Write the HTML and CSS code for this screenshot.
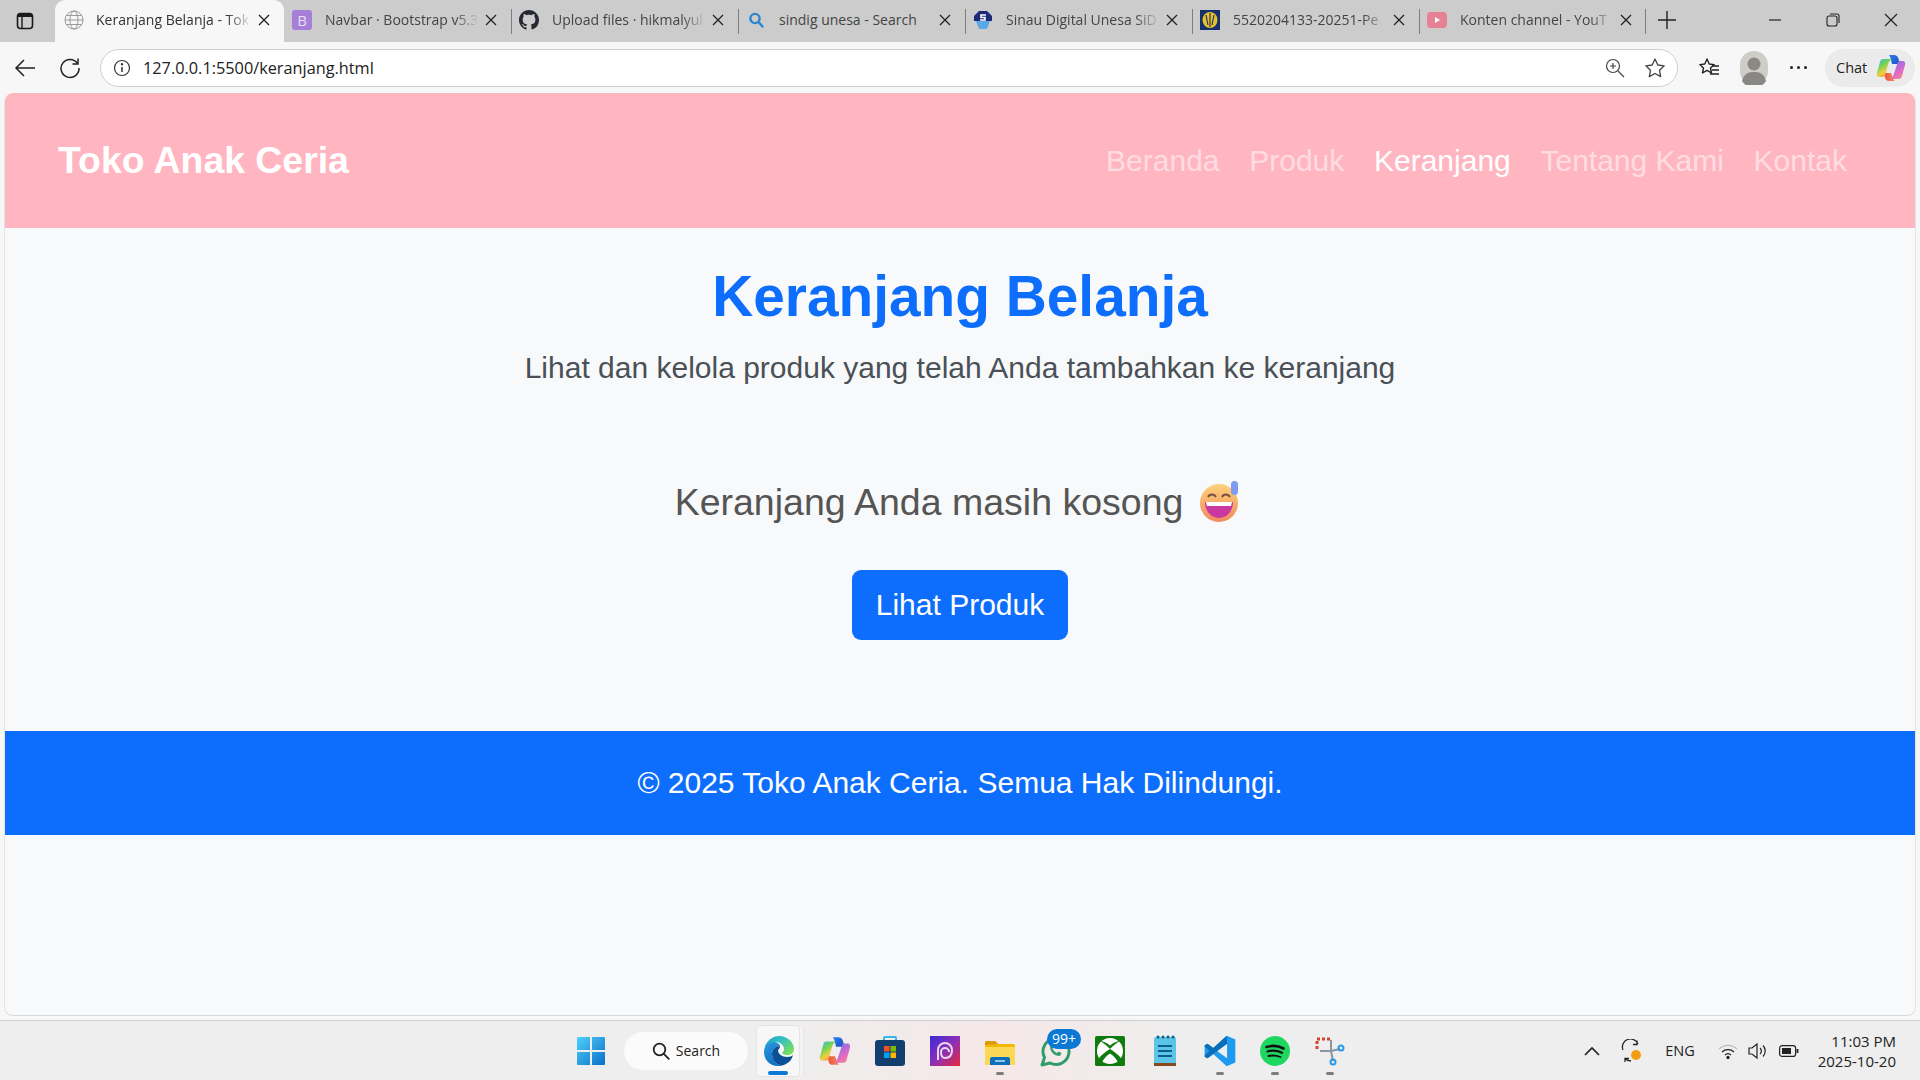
FILE: index.html
```html
<!DOCTYPE html>
<html lang="id">
<head>
<meta charset="utf-8">
<title>Keranjang Belanja - Toko Anak Ceria</title>
<link rel="stylesheet" href="styles.css">
</head>
<body>
<div class="tabstrip">
  <div class="tab-toggle"><svg width="18" height="18" viewBox="0 0 18 18"><rect x="1.5" y="1.5" width="15" height="15" rx="3" fill="none" stroke="#1a1a1a" stroke-width="1.6"/><path d="M2 2h14v3H2z" fill="#1a1a1a"/><path d="M6 5v11" stroke="#1a1a1a" stroke-width="1.4"/></svg></div>
  <div class="tab tab-active">
    <svg class="fav" width="20" height="20" viewBox="0 0 20 20" fill="none" stroke="#9a9a9a" stroke-width="1"><circle cx="10" cy="10" r="9"/><ellipse cx="10" cy="10" rx="4" ry="9"/><path d="M1 10h18M2.5 5.5h15M2.5 14.5h15"/></svg>
    <span class="tab-title">Keranjang Belanja - Tok</span>
    <span class="tab-x"><svg width="12" height="12" viewBox="0 0 12 12"><path d="M1 1l10 10M11 1L1 11" stroke="#222" stroke-width="1.3"/></svg></span>
  </div>
  <div class="tab">
    <span class="fav fav-b">B</span>
    <span class="tab-title">Navbar · Bootstrap v5.3</span>
    <span class="tab-x"><svg width="12" height="12" viewBox="0 0 12 12"><path d="M1 1l10 10M11 1L1 11" stroke="#222" stroke-width="1.3"/></svg></span>
  </div>
  <div class="tab tab-sep">
    <svg class="fav" width="20" height="20" viewBox="0 0 16 16"><path fill="#24292f" d="M8 0C3.58 0 0 3.58 0 8c0 3.54 2.29 6.53 5.47 7.59.4.07.55-.17.55-.38 0-.19-.01-.82-.01-1.49-2.01.37-2.53-.49-2.69-.94-.09-.23-.48-.94-.82-1.13-.28-.15-.68-.52-.01-.53.63-.01 1.08.58 1.23.82.72 1.21 1.87.87 2.33.66.07-.52.28-.87.51-1.07-1.78-.2-3.64-.89-3.64-3.95 0-.87.31-1.59.82-2.15-.08-.2-.36-1.02.08-2.12 0 0 .67-.21 2.2.82.64-.18 1.32-.27 2-.27s1.36.09 2 .27c1.53-1.04 2.2-.82 2.2-.82.44 1.1.16 1.92.08 2.12.51.56.82 1.27.82 2.15 0 3.07-1.87 3.75-3.65 3.95.29.25.54.73.54 1.48 0 1.07-.01 1.93-.01 2.2 0 .21.15.46.55.38A8.01 8.01 0 0 0 16 8c0-4.42-3.58-8-8-8z"/></svg>
    <span class="tab-title">Upload files · hikmalyul</span>
    <span class="tab-x"><svg width="12" height="12" viewBox="0 0 12 12"><path d="M1 1l10 10M11 1L1 11" stroke="#222" stroke-width="1.3"/></svg></span>
  </div>
  <div class="tab tab-sep">
    <svg class="fav" width="20" height="20" viewBox="0 0 20 20" fill="none" stroke="#2b86d0" stroke-width="2.4"><circle cx="9" cy="8.5" r="4.6"/><path d="M12.5 12l4 4.5" stroke-linecap="round"/></svg>
    <span class="tab-title tab-title-full">sindig unesa - Search</span>
    <span class="tab-x"><svg width="12" height="12" viewBox="0 0 12 12"><path d="M1 1l10 10M11 1L1 11" stroke="#222" stroke-width="1.3"/></svg></span>
  </div>
  <div class="tab tab-sep">
    <svg class="fav" width="20" height="20" viewBox="0 0 20 20"><path fill="#5aa9e6" d="M3 11h14l-3 8H6z"/><path fill="#1c2a78" d="M6 1h8l5 5v5H1V6z"/><path d="M13 5H8v2.5h4V10H7" fill="none" stroke="#fff" stroke-width="1.6"/></svg>
    <span class="tab-title">Sinau Digital Unesa SiD</span>
    <span class="tab-x"><svg width="12" height="12" viewBox="0 0 12 12"><path d="M1 1l10 10M11 1L1 11" stroke="#222" stroke-width="1.3"/></svg></span>
  </div>
  <div class="tab tab-sep">
    <svg class="fav" width="20" height="20" viewBox="0 0 20 20"><rect width="20" height="20" fill="#16306b"/><ellipse cx="10" cy="10" rx="7.5" ry="8" fill="#e8c02c"/><path d="M10 3v14M6 5l2 10M14 5l-2 10" stroke="#16306b" stroke-width="1.1"/></svg>
    <span class="tab-title">5520204133-20251-Pe</span>
    <span class="tab-x"><svg width="12" height="12" viewBox="0 0 12 12"><path d="M1 1l10 10M11 1L1 11" stroke="#222" stroke-width="1.3"/></svg></span>
  </div>
  <div class="tab tab-sep tab-last">
    <svg class="fav" width="20" height="20" viewBox="0 0 20 20"><rect y="2" width="20" height="16" rx="4" fill="#e77f95"/><path d="M8 7l5 3-5 3z" fill="#fff"/></svg>
    <span class="tab-title">Konten channel - YouT</span>
    <span class="tab-x"><svg width="12" height="12" viewBox="0 0 12 12"><path d="M1 1l10 10M11 1L1 11" stroke="#222" stroke-width="1.3"/></svg></span>
  </div>
  <div class="tab-plus"><svg width="18" height="18" viewBox="0 0 18 18"><path d="M9 0v18M0 9h18" stroke="#222" stroke-width="1.4"/></svg></div>
  <div class="win-controls">
    <svg width="14" height="14" viewBox="0 0 14 14"><path d="M1 7h12" stroke="#222" stroke-width="1.2"/></svg>
    <svg width="14" height="14" viewBox="0 0 14 14" fill="none" stroke="#222" stroke-width="1.1"><rect x="1" y="3" width="10" height="10" rx="2"/><path d="M4 1h7a2 2 0 0 1 2 2v7"/></svg>
    <svg width="14" height="14" viewBox="0 0 14 14"><path d="M1 1l12 12M13 1L1 13" stroke="#222" stroke-width="1.2"/></svg>
  </div>
</div>

<div class="toolbar">
  <svg class="tool-back" width="22" height="20" viewBox="0 0 22 20" fill="none" stroke="#222" stroke-width="1.5"><path d="M21 10H2M10 2l-8 8 8 8"/></svg>
  <svg class="tool-reload" width="22" height="22" viewBox="0 0 22 22" fill="none" stroke="#222" stroke-width="1.5"><path d="M18.5 6.5A9 9 0 1 0 20 11"/><path d="M19 1.5v5.5h-5.5"/></svg>
  <div class="address">
    <svg width="18" height="18" viewBox="0 0 18 18" fill="none" stroke="#333" stroke-width="1.2"><circle cx="9" cy="9" r="7.5"/><path d="M9 8v5" stroke-width="1.5"/><circle cx="9" cy="5.3" r=".6" fill="#333"/></svg>
    <span class="url">127.0.0.1:5500/keranjang.html</span>
    <svg class="addr-zoom" width="20" height="20" viewBox="0 0 20 20" fill="none" stroke="#444" stroke-width="1.2"><circle cx="8" cy="8" r="6.5"/><path d="M8 5v6M5 8h6M13 13l6 6"/></svg>
    <svg class="addr-star" width="22" height="22" viewBox="0 0 22 22" fill="none" stroke="#444" stroke-width="1.3"><path d="M11 2l2.8 6 6.4.8-4.7 4.4 1.2 6.4L11 16.5l-5.7 3.1 1.200-6.400L1.800 8.800 8.200 8z" stroke-linejoin="round"/></svg>
  </div>
  <svg class="tool-fav" width="22" height="22" viewBox="0 0 22 22" fill="none" stroke="#222" stroke-width="1.4"><path d="M9 2l2.200 5 5 .6-3.700 3.400 1 5L9 13.400 4.500 16l1-5L1.800 7.600l5-.6z" stroke-linejoin="round"/><path d="M14 9h7M14 13h7M12 17h9"/></svg>
  <div class="avatar"><svg width="28" height="34" viewBox="0 0 28 34"><rect width="28" height="34" rx="14" fill="#cfcdc8"/><circle cx="14" cy="13" r="6.500" fill="#8a8884"/><path d="M2 30c2-8 7-9 12-9s10 1 12 9a14 14 0 0 1-24 0z" fill="#8a8884"/></svg></div>
  <div class="tool-more"><i></i><i></i><i></i></div>
  <div class="chat">
    <span>Chat</span>
    <svg width="30" height="30" viewBox="0 0 30 30">
      <defs>
        <linearGradient id="cpL" x1="0" y1="0" x2=".6" y2="1"><stop offset="0" stop-color="#2bb8e8"/><stop offset=".4" stop-color="#6fd35a"/><stop offset=".75" stop-color="#f5cf3c"/><stop offset="1" stop-color="#f0803a"/></linearGradient>
        <linearGradient id="cpR" x1=".4" y1="0" x2="1" y2="1"><stop offset="0" stop-color="#8a6cf0"/><stop offset=".6" stop-color="#e86ac0"/><stop offset="1" stop-color="#f59a6a"/></linearGradient>
        <linearGradient id="cpT" x1="0" y1="0" x2="1" y2="1"><stop offset="0" stop-color="#2f7ef0"/><stop offset="1" stop-color="#1b4fc0"/></linearGradient>
        <linearGradient id="cpB" x1="0" y1="0" x2="1" y2="0"><stop offset="0" stop-color="#f0503a"/><stop offset="1" stop-color="#f58a5a"/></linearGradient>
        <symbol id="cp" viewBox="0 0 30 30">
          <path fill="url(#cpT)" d="M13 2h5c2.500 0 3.700 1.300 4.300 3.200L24 11h-8l-1-4c-.4-1.800-1-3.600-2-5z"/>
          <path fill="url(#cpB)" d="M8 20h7l1.500 4c.6 1.800 1.200 3 2.500 4h-6c-2.500 0-3.500-1.300-4-3.200z"/>
          <path fill="url(#cpL)" d="M7 6h9c-2 1-3 2.500-3.800 5L9.500 21c-.8 2.400-2 3-4 3H3.500C1 24 .4 22 1 20L4 9c.5-2 1.300-3 3-3z"/>
          <path fill="url(#cpR)" d="M23 8h3.500c2.500 0 3 2 2.500 4l-3 11c-.5 2-1.300 3-3 3h-9c2-1 3-2.500 3.800-5l3.400-10c.5-1.800 1-3 1.800-3z"/>
        </symbol>
      </defs>
      <use href="#cp"/>
    </svg>
  </div>
</div>

<div class="viewport">
  <header class="navbar">
    <a class="brand">Toko Anak Ceria</a>
    <nav class="nav">
      <a class="nav-link">Beranda</a>
      <a class="nav-link">Produk</a>
      <a class="nav-link nav-link-active">Keranjang</a>
      <a class="nav-link">Tentang Kami</a>
      <a class="nav-link">Kontak</a>
    </nav>
  </header>
  <main class="content">
    <h1 class="title">Keranjang Belanja</h1>
    <p class="lead">Lihat dan kelola produk yang telah Anda tambahkan ke keranjang</p>
    <p class="empty">Keranjang Anda masih kosong
      <svg class="emoji" width="40" height="42" viewBox="0 0 40 42"><defs><linearGradient id="emo" x1="0" y1="0" x2="0" y2="1"><stop offset="0" stop-color="#fdd27a"/><stop offset="1" stop-color="#f08a5d"/></linearGradient></defs><circle cx="19" cy="22" r="19" fill="url(#emo)"/><path d="M5 21h28c0 10-7 16-14 16S5 31 5 21z" fill="#c9389f"/><path d="M6 21h26l-1 4H7z" fill="#fff"/><path d="M8 16c1.500-3.500 6-3.500 8 0M22 16c1.500-3.500 6-3.500 8 0" fill="none" stroke="#7a5040" stroke-width="2"/><rect x="31" y="0" width="7" height="14" rx="3.500" fill="#7c9bf2"/></svg>
    </p>
    <a class="btn">Lihat Produk</a>
  </main>
  <footer class="footer">© 2025 Toko Anak Ceria. Semua Hak Dilindungi.</footer>
</div>

<div class="taskbar">
  <div class="task-center">
    <div class="task-icon"><svg width="30" height="30" viewBox="0 0 30 30"><defs><linearGradient id="win" x1="0" y1="0" x2="1" y2="1"><stop offset="0" stop-color="#4fd0fa"/><stop offset="1" stop-color="#0a6fc8"/></linearGradient></defs><path fill="url(#win)" d="M1 2a1 1 0 0 1 1-1h12v13H1zM16 1h12a1 1 0 0 1 1 1v12H16zM1 16h13v13H2a1 1 0 0 1-1-1zM16 16h13v12a1 1 0 0 1-1 1H16z"/></svg></div>
    <div class="task-search"><svg width="18" height="18" viewBox="0 0 18 18" fill="none" stroke="#222" stroke-width="1.800"><circle cx="7.500" cy="7.500" r="5.800"/><path d="M11.800 11.800l5 5" stroke-linecap="round"/></svg><span>Search</span></div>
    <div class="task-icon task-edge">
      <svg width="32" height="32" viewBox="0 0 32 32"><defs><linearGradient id="edgeA" x1="0" y1="0" x2="1" y2=".7"><stop offset="0" stop-color="#1f9fd0"/><stop offset=".5" stop-color="#35c1c0"/><stop offset="1" stop-color="#7ade5a"/></linearGradient><linearGradient id="edgeB" x1="0" y1="0" x2=".5" y2="1"><stop offset="0" stop-color="#2a9ae0"/><stop offset="1" stop-color="#0f6fc0"/></linearGradient></defs><path fill="url(#edgeA)" d="M3 9C6 4 11 1 16 1c9 0 15 7 15 13 0 4-3 6-7 6-2 0-4-.5-5-2 1-1 2-2 2-4 0-4-4-7-8-7-5 0-9 3-11 7-.5-2 0-3 1-5z"/><path fill="url(#edgeB)" d="M1 17c0-6 5-10 9.500-10C14 7 16.500 9 17 11c-4 0-8 3-8 8 0 5 4 11 10 11.500-1 .4-3 .5-4 .5C7 31 1 25 1 17z"/><path fill="#0b4f94" d="M9 19c0-5 4-8 8-8 0 2-1 3-2 4 0 4 4 7 9 7 3 0 5-1 6-2-2 7-6 9-11 10.500C13 30 9 24.500 9 19z"/></svg>
      <i class="run run-active"></i>
    </div>
    <div class="task-icon"><svg width="32" height="32" viewBox="0 0 30 30"><use href="#cp"/></svg></div>
    <div class="task-icon"><svg width="30" height="32" viewBox="0 0 30 32"><path d="M9 6V3a1 1 0 0 1 1-1h10a1 1 0 0 1 1 1v3" fill="none" stroke="#35b8e8" stroke-width="2"/><rect y="5" width="30" height="26" rx="3" fill="#123f6e"/><rect x="9" y="11" width="5.500" height="5.500" fill="#f25022"/><rect x="15.500" y="11" width="5.500" height="5.500" fill="#7fba00"/><rect x="9" y="17.500" width="5.500" height="5.500" fill="#00a4ef"/><rect x="15.500" y="17.500" width="5.500" height="5.500" fill="#ffb900"/></svg></div>
    <div class="task-icon"><svg width="30" height="30" viewBox="0 0 30 30"><defs><linearGradient id="prot" x1="0" y1="0" x2="1" y2="1"><stop offset="0" stop-color="#3a2bd8"/><stop offset=".5" stop-color="#8d2fb8"/><stop offset="1" stop-color="#e8283c"/></linearGradient></defs><rect width="30" height="30" fill="url(#prot)"/><path d="M8 24V14a7 7 0 0 1 14 0c0 5-2 8-7 8-3 0-4-3-4-6a4 4 0 0 1 8 0" fill="none" stroke="#e8d8f0" stroke-width="2"/></svg></div>
    <div class="task-icon">
      <svg width="32" height="28" viewBox="0 0 32 28"><path d="M1 6a2 2 0 0 1 2-2h8l3 3h15a2 2 0 0 1 2 2v17a2 2 0 0 1-2 2H3a2 2 0 0 1-2-2z" fill="#f2b705"/><path d="M1 8V6a2 2 0 0 1 2-2h8l3 3z" fill="#d99a00"/><path d="M1 10h30v16a2 2 0 0 1-2 2H3a2 2 0 0 1-2-2z" fill="#fbd957"/><path d="M6 28v-6a2 2 0 0 1 2-2h16a2 2 0 0 1 2 2v6z" fill="#0d6fbc"/><path d="M11 24h10" stroke="#bfe0f7" stroke-width="1.500"/></svg>
      <i class="run"></i>
    </div>
    <div class="task-icon">
      <svg width="32" height="32" viewBox="0 0 32 32" fill="none" stroke="#2f9e6a" stroke-width="3"><path d="M3 30l2.500-7.500A13 13 0 1 1 11 28z" stroke-linejoin="round"/><path d="M11 11c0 6 4 10 10 10l1.500-3-3-1.500-1.500 1.500c-2-1-3.500-2.500-4.500-4.500l1.500-1.500L13.500 9z" fill="#2f9e6a" stroke="none"/></svg>
      <span class="badge">99+</span>
    </div>
    <div class="task-icon"><svg width="30" height="30" viewBox="0 0 30 30"><rect width="30" height="30" rx="1.500" fill="#107c10"/><circle cx="15" cy="15" r="13" fill="#fff"/><path fill="#107c10" d="M5 5C9 7 12 10 15 13 18 10 21 7 25 5 21 5.500 18 7 15 9.500 12 7 9 5.500 5 5zM3.500 23C6 19 11 15.500 15 13v4.500C11 20 8 24 6.800 27zM26.500 23C24 19 19 15.500 15 13v4.500C19 20 22 24 23.200 27z"/></svg></div>
    <div class="task-icon"><svg width="24" height="32" viewBox="-1 0 24 32"><rect y="2" width="22" height="28" rx="2" fill="#5cc4e6"/><rect y="28" width="22" height="3" fill="#8a4a1e"/><g fill="#0c5f88"><circle cx="4" cy="2" r="1.500"/><circle cx="9" cy="2" r="1.500"/><circle cx="14" cy="2" r="1.500"/><circle cx="19" cy="2" r="1.500"/><rect x="4" y="10" width="14" height="2"/><rect x="4" y="15" width="14" height="2"/><rect x="4" y="20" width="14" height="2"/></g></svg></div>
    <div class="task-icon">
      <svg width="32" height="32" viewBox="0 0 100 100"><path d="M71 2 29 41 11 27l-9 5v36l9 5 18-14 42 39 27-12V14zM72 27v46L41 50z" fill="#1d9bf0" fill-rule="evenodd"/><path d="M71 2 29 41 11 27l-9 5v4l16 14L2 64v4l9 5L72 27z" fill="#0a6fb8"/></svg>
      <i class="run"></i>
    </div>
    <div class="task-icon">
      <svg width="30" height="30" viewBox="0 0 30 30" fill="none" stroke="#111" stroke-width="2.600" stroke-linecap="round"><circle cx="15" cy="15" r="15" fill="#1ed760" stroke="none"/><path d="M6.500 11c6-1.800 12-1.300 17 1.500"/><path d="M7.500 15.500c5-1.400 10-1 14.500 1.300" stroke-width="2.200"/><path d="M8.500 20c4-1 8-.7 12 1" stroke-width="1.900"/></svg>
      <i class="run"></i>
    </div>
    <div class="task-icon">
      <svg width="30" height="30" viewBox="0 0 30 30" fill="none"><path d="M2 13V3h13" stroke="#d8432c" stroke-width="3" stroke-dasharray="3 2"/><path d="M5 15h11v0M16 4v11M16 15l9-2M16 15l2 10" stroke="#8a95a0" stroke-width="2"/><circle cx="26" cy="12" r="2.500" stroke="#2b9ae8" stroke-width="2"/><circle cx="18" cy="26" r="2.500" stroke="#2b9ae8" stroke-width="2"/></svg>
      <i class="run"></i>
    </div>
  </div>
  <div class="tray">
    <svg width="16" height="10" viewBox="0 0 16 10" fill="none" stroke="#222" stroke-width="1.700"><path d="M1 9l7-7 7 7"/></svg>
    <svg class="tray-sync" width="24" height="24" viewBox="0 0 24 24" fill="none" stroke="#222" stroke-width="1.300"><path d="M3 11A8 8 0 0 1 18 5M17 1.500V5.500h-4M5 23v-3.500h4M5 19.500c2 2 4 2.500 6 2.500"/><circle cx="16" cy="16" r="5" fill="#f39c12" stroke="none"/></svg>
    <span class="tray-lang">ENG</span>
    <svg class="tray-wifi" width="20" height="16" viewBox="0 0 20 16" fill="none" stroke="#222" stroke-width="1.300"><path d="M1 6a13 13 0 0 1 18 0" stroke="#bbb"/><path d="M4 9a9 9 0 0 1 12 0"/><path d="M7 12a4.500 4.500 0 0 1 6 0"/><circle cx="10" cy="14.500" r="1" fill="#222"/></svg>
    <svg class="tray-vol" width="20" height="18" viewBox="0 0 20 18" fill="none" stroke="#222" stroke-width="1.200"><path d="M1 6h3l5-4v14l-5-4H1z"/><path d="M12 6a4 4 0 0 1 0 6M15 3.500a8 8 0 0 1 0 11"/></svg>
    <svg class="tray-bat" width="20" height="14" viewBox="0 0 20 14" fill="none" stroke="#222" stroke-width="1.200"><rect x=".6" y="1.600" width="16" height="10.800" rx="2.500"/><rect x="3" y="4" width="9" height="6" fill="#222" stroke="none"/><path d="M18.500 5v4" stroke-width="1.800"/></svg>
    <div class="clock"><span>11:03 PM</span><span>2025-10-20</span></div>
  </div>
</div>
</body>
</html>
```

FILE: styles.css
```css
* { box-sizing: border-box; }
html, body { margin: 0; height: 1080px; overflow: hidden; }
body {
  display: flex;
  flex-direction: column;
  background: #f7f7f7;
  font-family: "Open Sans", "Noto Sans", sans-serif;
  color: #222;
}

/* browser tab strip */
.tabstrip {
  display: flex;
  align-items: center;
  height: 42px;
  flex: none;
  background: #cccccc;
}
.tab-toggle { width: 55px; display: flex; justify-content: center; padding-right: 6px; }
.tab {
  display: flex;
  align-items: center;
  width: 227px;
  height: 42px;
  padding: 0 14px 3px 8px;
  position: relative;
}
.tab-active {
  width: 229px;
  padding-left: 9px;
  background: #f7f7f7;
  border-radius: 10px 10px 0 0;
}
.tab-active .fav { margin-right: 12px; }
.tab-sep::before {
  content: "";
  position: absolute;
  left: 0;
  top: 9px;
  height: 25px;
  border-left: 1px solid #7f7f7f;
}
.tab-last::after {
  content: "";
  position: absolute;
  right: 0;
  top: 9px;
  height: 25px;
  border-left: 1px solid #7f7f7f;
}
.fav { flex: none; margin-right: 13px; }
.fav-b {
  width: 20px;
  height: 20px;
  border-radius: 3px;
  background: #a67fd8;
  color: #e8def5;
  font-size: 15px;
  line-height: 20px;
  text-align: center;
}
.tab-title {
  flex: 1;
  min-width: 0;
  white-space: nowrap;
  overflow: hidden;
  font-size: 14px;
  color: #444;
  -webkit-mask-image: linear-gradient(90deg, #000 84%, transparent 100%);
  mask-image: linear-gradient(90deg, #000 84%, transparent 100%);
}
.tab-active .tab-title { color: #333; }
.tab-title-full { -webkit-mask-image: none; mask-image: none; }
.tab-x { display: flex; flex: none; margin-left: 6px; }
.tab-plus { padding: 0 0 3px 12px; display: flex; }
.win-controls {
  margin-left: auto;
  display: flex;
  gap: 44px;
  padding: 0 22px 3px 0;
}

/* browser toolbar */
.toolbar {
  display: flex;
  align-items: center;
  height: 51px;
  flex: none;
  padding: 0 5px 0 14px;
  background: #f7f7f7;
}
.tool-reload { margin-left: 23px; }
.address {
  flex: none;
  width: 1578px;
  height: 38px;
  margin-left: 19px;
  padding: 0 11px 0 12px;
  display: flex;
  align-items: center;
  background: #fff;
  border: 1px solid #cfcfcf;
  border-radius: 19px;
}
.url { margin-left: 12px; font-size: 16.3px; color: #222; flex: 1; }
.addr-star { margin-left: 19px; }
.tool-fav { margin-left: 20px; }
.avatar { margin-left: 20px; display: flex; }
.tool-more { margin-left: 22px; display: flex; gap: 4px; }
.tool-more i { width: 3px; height: 3px; border-radius: 50%; background: #222; }
.chat {
  margin-left: 18px;
  height: 38px;
  width: 90px;
  padding: 0 9px 0 11px;
  display: flex;
  align-items: center;
  justify-content: space-between;
  border-radius: 19px;
  background: #ebebeb;
  font-size: 14.5px;
}

/* page viewport */
.viewport {
  flex: 1;
  margin: 0 4px;
  display: flex;
  flex-direction: column;
  background: #f8f9fa;
  border-radius: 9px;
  border-bottom: 1px solid #d8d8d8;
  border-left: 1px solid #e4e4e4;
  border-right: 1px solid #e4e4e4;
  overflow: hidden;
  font-family: "Liberation Sans", Arial, sans-serif;
}
.navbar {
  flex: none;
  height: 135px;
  padding: 0 68px 0 53px;
  display: flex;
  align-items: center;
  justify-content: space-between;
  background: #ffb6c1;
}
.brand { font-size: 37.4px; font-weight: 700; color: #fff; }
.nav { display: flex; gap: 29.7px; }
.nav-link { font-size: 30px; color: rgba(255, 255, 255, .55); }
.nav-link-active { color: #fff; }

.content {
  flex: none;
  height: 503px;
  display: flex;
  flex-direction: column;
  align-items: center;
  padding-top: 34px;
}
.title {
  margin: 0;
  font-size: 56.8px;
  line-height: 69px;
  font-weight: 700;
  color: #0d6efd;
}
.lead {
  margin: 14px 0 0;
  font-size: 30px;
  line-height: 45px;
  color: #495057;
}
.empty {
  margin: 82px 0 0;
  padding-right: 5px;
  font-size: 37.5px;
  line-height: 60px;
  color: #555;
  display: flex;
  align-items: center;
  gap: 17px;
}
.emoji { flex: none; }
.btn {
  margin-top: 38px;
  width: 216px;
  height: 70px;
  display: flex;
  align-items: center;
  justify-content: center;
  font-size: 30px;
  color: #fff;
  background: #0d6efd;
  border-radius: 9px;
}
.footer {
  flex: none;
  height: 104px;
  display: flex;
  align-items: center;
  justify-content: center;
  font-size: 30px;
  color: #fff;
  background: #0d6efd;
}

/* windows taskbar */
.taskbar {
  flex: none;
  height: 60px;
  margin-top: 4px;
  padding-left: 563px;
  display: flex;
  align-items: center;
  background: linear-gradient(90deg, #eeeeee 40%, #f6e8e8 52%, #eeeeee 62%);
  border-top: 1px solid #cfcfcf;
}
.task-center { display: flex; align-items: center; }
.task-icon {
  width: 55px;
  height: 52px;
  display: flex;
  align-items: center;
  justify-content: center;
  position: relative;
  flex: none;
}
.task-search {
  width: 124px;
  height: 38px;
  margin: 0 4px 0 6px;
  display: flex;
  align-items: center;
  justify-content: center;
  gap: 6px;
  border-radius: 19px;
  background: #fbfbfb;
  font-size: 14px;
  color: #222;
}
.task-edge {
  background: #f7f7f7;
  border: 1px solid #e4e4e4;
  border-radius: 4px;
  width: 44px;
  padding-left: 2px;
  margin: 0 7px 0 4px;
  box-shadow: 4px 0 0 -1px #f3f3f3, 5px 0 0 -1px #e4e4e4;
}
.run {
  position: absolute;
  left: 50%;
  bottom: 2px;
  width: 8px;
  height: 3px;
  margin-left: -4px;
  border-radius: 2px;
  background: #7d7d7d;
}
.run-active { width: 20px; margin-left: -10px; bottom: 1px; height: 4px; background: #0a78d4; }
.badge {
  position: absolute;
  top: 4px;
  left: 20px;
  width: 34px;
  height: 20px;
  border-radius: 10px;
  background: #0a78d4;
  color: #fff;
  font-size: 14px;
  line-height: 20px;
  text-align: center;
}
.tray {
  margin-left: auto;
  padding-right: 24px;
  display: flex;
  align-items: center;
}
.tray-sync { margin-left: 20px; }
.tray-lang { margin-left: 21px; font-size: 14.5px; }
.tray-wifi { margin-left: 23px; }
.tray-vol { margin-left: 10px; }
.tray-bat { margin-left: 11px; }
.clock {
  margin-left: 19px;
  display: flex;
  flex-direction: column;
  align-items: flex-end;
  font-size: 15px;
  line-height: 20px;
}
```
